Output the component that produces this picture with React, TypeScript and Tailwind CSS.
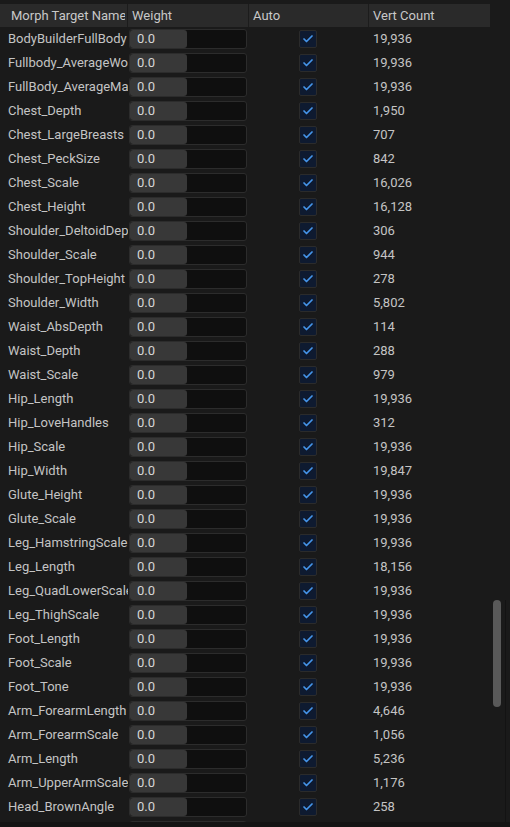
import { Check } from "lucide-react";

const ROWS: [string, string][] = [
  ["BodyBuilderFullBody", "19,936"],
  ["Fullbody_AverageWoman", "19,936"],
  ["FullBody_AverageMale", "19,936"],
  ["Chest_Depth", "1,950"],
  ["Chest_LargeBreasts", "707"],
  ["Chest_PeckSize", "842"],
  ["Chest_Scale", "16,026"],
  ["Chest_Height", "16,128"],
  ["Shoulder_DeltoidDepth", "306"],
  ["Shoulder_Scale", "944"],
  ["Shoulder_TopHeight", "278"],
  ["Shoulder_Width", "5,802"],
  ["Waist_AbsDepth", "114"],
  ["Waist_Depth", "288"],
  ["Waist_Scale", "979"],
  ["Hip_Length", "19,936"],
  ["Hip_LoveHandles", "312"],
  ["Hip_Scale", "19,936"],
  ["Hip_Width", "19,847"],
  ["Glute_Height", "19,936"],
  ["Glute_Scale", "19,936"],
  ["Leg_HamstringScale", "19,936"],
  ["Leg_Length", "18,156"],
  ["Leg_QuadLowerScale", "19,936"],
  ["Leg_ThighScale", "19,936"],
  ["Foot_Length", "19,936"],
  ["Foot_Scale", "19,936"],
  ["Foot_Tone", "19,936"],
  ["Arm_ForearmLength", "4,646"],
  ["Arm_ForearmScale", "1,056"],
  ["Arm_Length", "5,236"],
  ["Arm_UpperArmScale", "1,176"],
  ["Head_BrownAngle", "258"],
  ["Head_Scale", "19,936"],
];

function Row({ name, count }: { name: string; count: string }) {
  return (
    <div className="flex h-6 shrink-0 items-center text-[13px] text-[#c4c4c4]">
      <div className="w-[128px] shrink-0 overflow-hidden whitespace-nowrap pl-2">{name}</div>
      {/* weight spinbox */}
      <div className="ml-[1px] flex h-5 w-[118px] shrink-0 rounded-[3px] border border-[#2c2c2c] bg-[#0f0f0f]">
        <div className="flex w-[57px] items-center rounded-[3px] bg-[#383838] pl-[7px] text-[#d6d6d6]">0.0</div>
      </div>
      <div className="flex w-[122px] shrink-0 justify-center">
        <div className="flex h-[18px] w-[18px] items-center justify-center rounded-[2px] border border-[#2b2b2b] bg-[#0e1a30]">
          <Check className="h-3 w-3 text-[#4595ea]" strokeWidth={3.5} />
        </div>
      </div>
      <div className="pl-1">{count}</div>
    </div>
  );
}

export default function App() {
  return (
    <div
      className="flex h-[827px] w-[510px] flex-col overflow-hidden bg-[#1a1a1a]"
      style={{ fontFamily: "Roboto, 'Noto Sans', sans-serif" }}
    >
      <div className="flex min-h-0 flex-1">
        <div className="flex w-[490px] shrink-0 flex-col overflow-hidden pt-[4px]">
          {/* header */}
          <div className="flex h-[23px] shrink-0 items-center bg-[#2a2a2a] text-[13px] text-[#c8c8c8]">
            <div className="h-full w-[128px] shrink-0 border-r border-[#1c1c1c] pr-[2px]">
              <div className="h-full overflow-hidden whitespace-nowrap pl-[11px] leading-[23px]">Morph Target Name</div>
            </div>
            <div className="h-full w-[121px] shrink-0 border-r border-[#1c1c1c] pl-1 leading-[23px]">Weight</div>
            <div className="h-full w-[120px] shrink-0 border-r border-[#1c1c1c] pl-1 leading-[23px]">Auto</div>
            <div className="h-full flex-1 pl-1 leading-[23px]">Vert Count</div>
          </div>
          <div className="flex flex-col">
            {ROWS.map(([n, c]) => (
              <Row key={n} name={n} count={c} />
            ))}
          </div>
        </div>
        {/* scrollbar */}
        <div className="flex flex-1 pt-[600px]">
          <div className="ml-[3px] h-[107px] w-[8px] rounded-full bg-[#595959]" />
          <div className="ml-[4px] h-full w-px bg-[#131313]" />
        </div>
      </div>
      <div className="h-[5px] shrink-0 bg-[#141414]" />
    </div>
  );
}
